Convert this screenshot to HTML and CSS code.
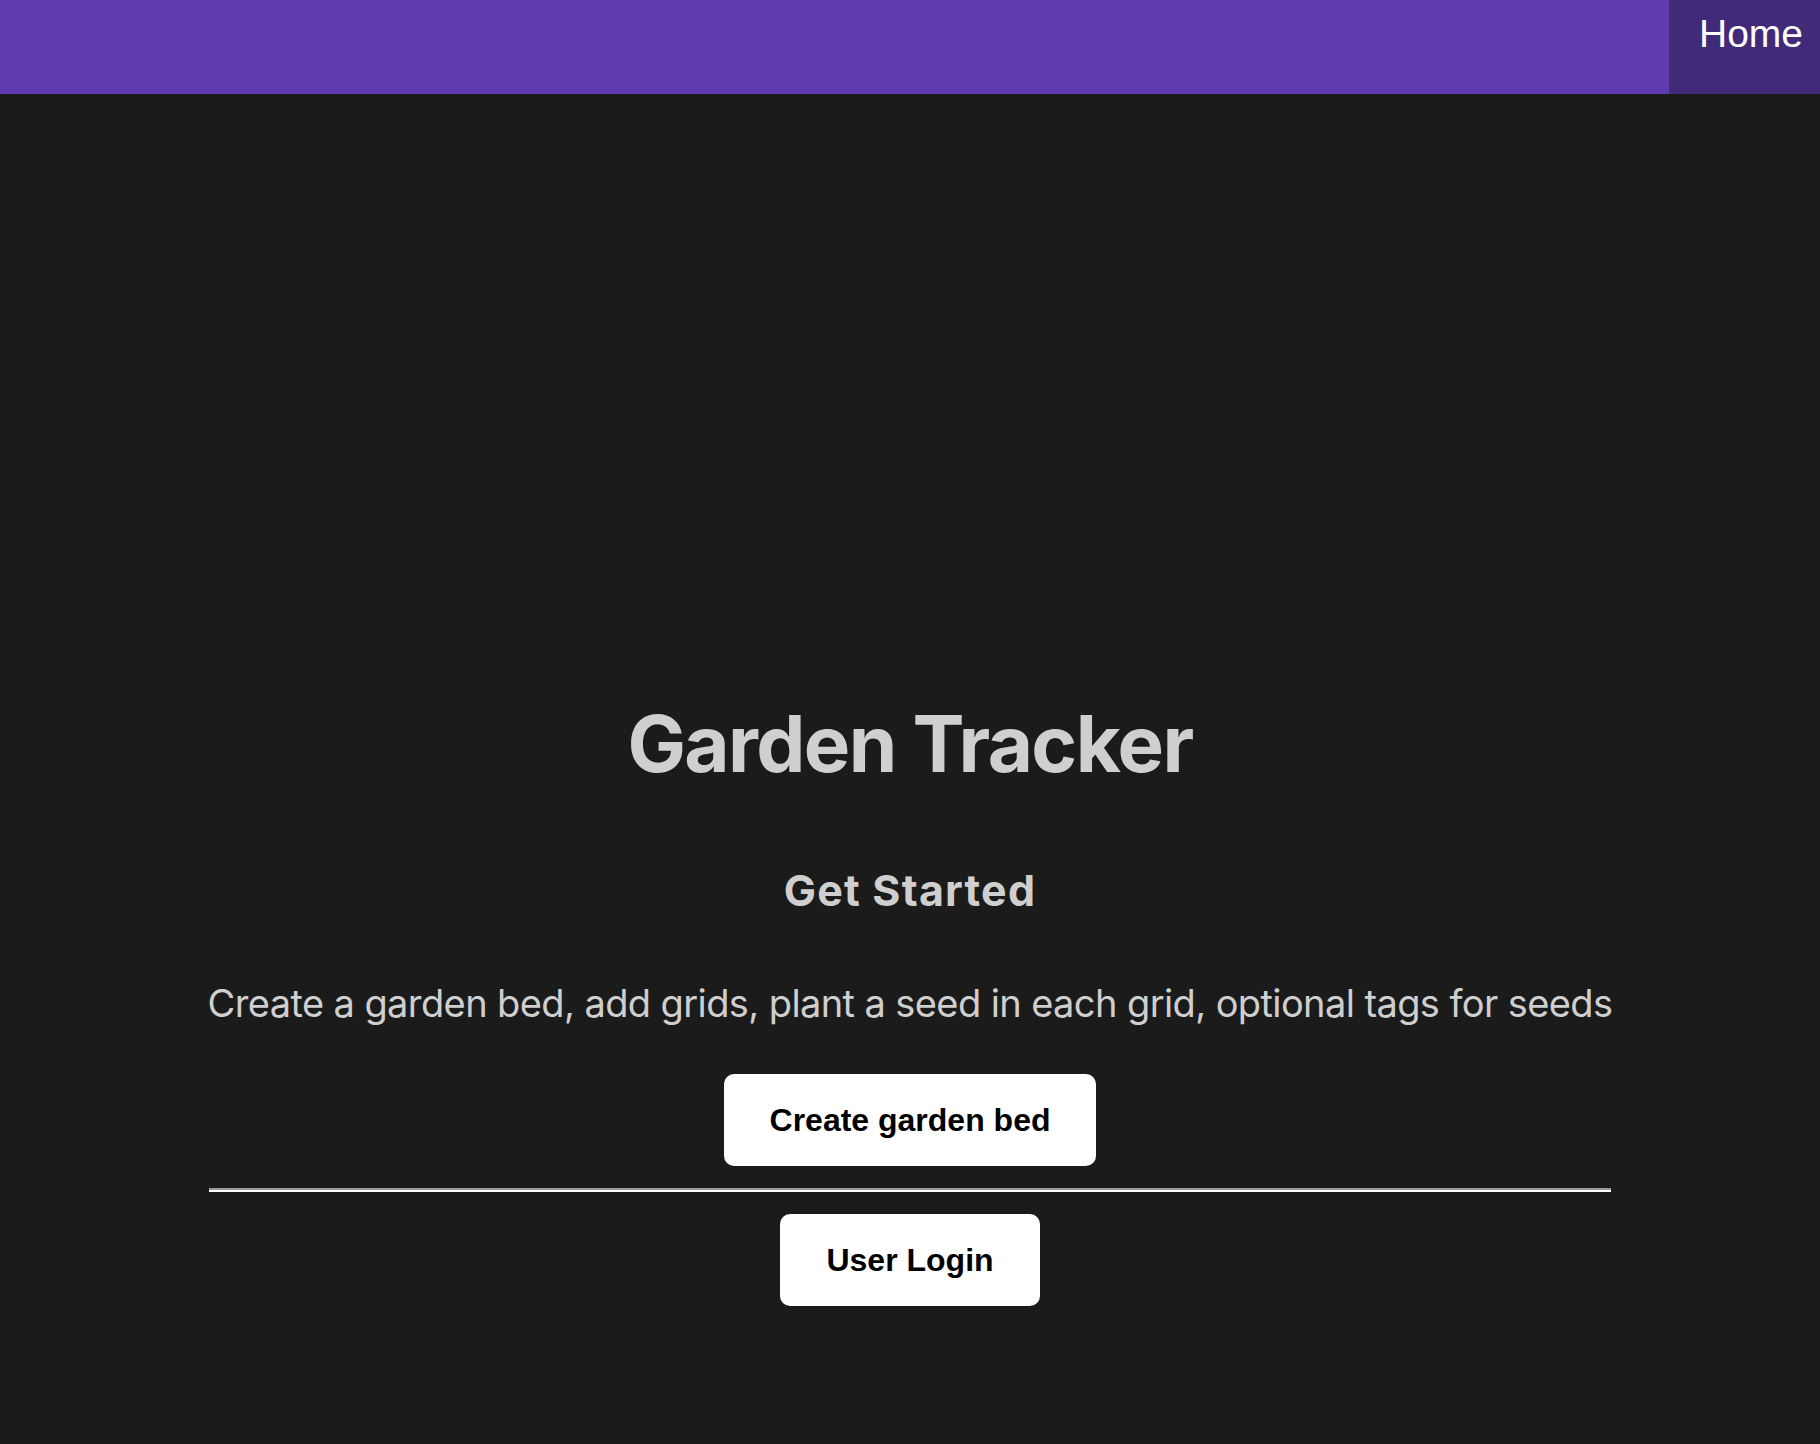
FILE: index.html
```html
<!DOCTYPE html>
<html>
<head>
<meta charset="utf-8">
<link rel="stylesheet" href="styles.css">
</head>
<body>
<header class="navbar">
  <a class="nav-home" href="#">Home</a>
</header>
<main class="content">
  <h1 class="title">Garden Tracker</h1>
  <h2 class="subtitle">Get Started</h2>
  <p class="intro">Create a garden bed, add grids, plant a seed in each grid, optional tags for seeds</p>
  <button class="btn">Create garden bed</button>
  <hr class="divider">
  <button class="btn">User Login</button>
</main>
</body>
</html>
```
FILE: styles.css
```css
html, body {
  margin: 0;
  padding: 0;
  background: #1b1b1b;
}
body {
  min-height: 1444px;
  font-family: Inter, "Liberation Sans", sans-serif;
  color: #cfcfcf;
}
.navbar {
  height: 94px;
  background: #613cb0;
  display: flex;
  justify-content: flex-end;
}
.nav-home {
  width: 151px;
  box-sizing: border-box;
  padding: 12px 0 0 30px;
  background: #412a78;
  color: #ffffff;
  text-decoration: none;
  font-family: "Liberation Sans", Arial, sans-serif;
  font-size: 39px;
  line-height: 1.15;
}
.content {
  width: 1402px;
  margin: 0 auto;
  display: flex;
  flex-direction: column;
  align-items: center;
  text-align: center;
}
.title {
  margin: 611px 0 0;
  font-size: 78px;
  line-height: 1;
  font-weight: 700;
  letter-spacing: -1.6px;
}
.subtitle {
  margin: 86px 0 0;
  font-size: 43px;
  line-height: 1;
  font-weight: 700;
  letter-spacing: 1.2px;
}
.intro {
  margin: 72px 0 0;
  font-size: 38px;
  line-height: 1;
  font-weight: 400;
  letter-spacing: -0.6px;
  white-space: nowrap;
}
.btn {
  margin-top: 52px;
  height: 92px;
  padding: 0 46px;
  border: none;
  border-radius: 10px;
  background: #ffffff;
  color: #000000;
  font-family: "Liberation Sans", Arial, sans-serif;
  font-weight: 700;
  font-size: 32px;
  cursor: pointer;
}
.divider {
  align-self: stretch;
  margin: 22px 0;
  height: 0;
  border: none;
  border-top: 2px solid #9a9a9a;
  border-bottom: 2px solid #ffffff;
}
.divider + .btn {
  margin-top: 0;
}
```
